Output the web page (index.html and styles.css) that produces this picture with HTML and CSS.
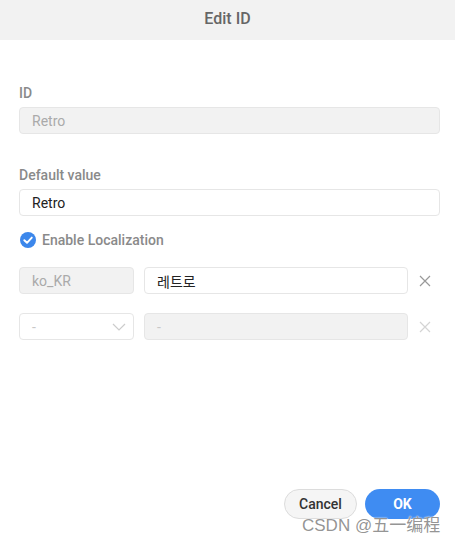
FILE: index.html
```html
<!DOCTYPE html>
<html>
<head>
<meta charset="utf-8">
<link rel="stylesheet" href="styles.css">
</head>
<body>
<div class="dialog">
  <div class="header">Edit ID</div>
  <div class="body">
    <div class="field first">
      <div class="label">ID</div>
      <div class="input disabled">Retro</div>
    </div>
    <div class="field second">
      <div class="label">Default value</div>
      <div class="input">Retro</div>
    </div>
    <div class="check">
      <svg width="16" height="16" viewBox="0 0 16 16"><circle cx="8" cy="8" r="8" fill="#3c87eb"/><path d="M4.3 8.2 L7 10.8 L11.8 5.6" fill="none" stroke="#fff" stroke-width="1.9" stroke-linecap="round" stroke-linejoin="round"/></svg>
      <span>Enable Localization</span>
    </div>
    <div class="row">
      <div class="input small disabled">ko_KR</div>
      <div class="input grow">레트로</div>
      <svg class="x" width="12" height="12" viewBox="0 0 12 12"><path d="M1 1 L11 11 M11 1 L1 11" stroke="#999" stroke-width="1.2"/></svg>
    </div>
    <div class="row">
      <div class="input small select"><span>-</span>
        <svg width="14" height="8" viewBox="0 0 14 8"><path d="M1 1 L7 7 L13 1" fill="none" stroke="#ccc" stroke-width="1.2"/></svg>
      </div>
      <div class="input grow disabled faint">-</div>
      <svg class="x" width="12" height="12" viewBox="0 0 12 12"><path d="M1 1 L11 11 M11 1 L1 11" stroke="#d4d4d4" stroke-width="1.2"/></svg>
    </div>
  </div>
  <div class="footer">
    <button class="btn cancel">Cancel</button>
    <button class="btn ok">OK</button>
  </div>
  <div class="watermark">CSDN @五一编程</div>
</div>
</body>
</html>
```
FILE: styles.css
```css
* { box-sizing: border-box; }
body { margin: 0; font-family: Roboto, "Noto Sans", sans-serif; background: #fff; }
.dialog { width: 455px; height: 540px; position: relative; display: flex; flex-direction: column; }
.header { height: 40px; background: #f2f2f2; color: #666; font-size: 16px; font-weight: 500; display: flex; align-items: center; justify-content: center; padding-bottom: 4px; }
.body { padding: 0 15px 0 19px; flex: 1; display: flex; flex-direction: column; }
.field { display: flex; flex-direction: column; }
.field.first { margin-top: 45px; }
.field.second { margin-top: 33px; }
.label { font-size: 14px; font-weight: 500; color: #8a8a8a; height: 16px; line-height: 16px; margin-bottom: 6px; }
.input { height: 27px; border: 1px solid #e6e6e6; border-radius: 4px; background: #fff; color: #222; font-size: 14px; display: flex; align-items: center; padding-left: 12px; font-family: Roboto, "Noto Sans CJK KR", sans-serif; }
.input.disabled { background: #f2f2f2; color: #aaa; }
.input.faint { color: #c8c8c8; }
.check { display: flex; align-items: center; gap: 6px; margin-top: 15px; height: 18px; padding-left: 1px; }
.check span { font-size: 14px; font-weight: 500; color: #8a8a8a; }
.row { display: flex; align-items: center; margin-top: 19px; }
.check + .row { margin-top: 18px; }
.small { width: 115px; }
.grow { width: 264px; margin-left: 10px; }
.select { justify-content: space-between; padding-right: 7px; color: #c8c8c8; }
.x { margin-left: 11px; }
.footer { display: flex; justify-content: flex-end; gap: 8px; padding: 0 15px 21px 0; }
.btn { height: 30px; border-radius: 15px; font-family: Roboto, sans-serif; font-size: 14px; font-weight: 500; cursor: pointer; }
.cancel { width: 73px; background: #f5f5f5; border: 1px solid #dcdcdc; color: #333; }
.ok { width: 75px; background: #3f8cf2; border: none; color: #fff; font-weight: 700; }
.watermark { position: absolute; left: 302px; top: 511px; font-family: "Liberation Sans", "Noto Sans CJK SC", sans-serif; font-size: 17px; color: rgba(120,120,120,0.8); text-shadow: 0 0 2px #fff, 0 0 1px #fff; }
```
